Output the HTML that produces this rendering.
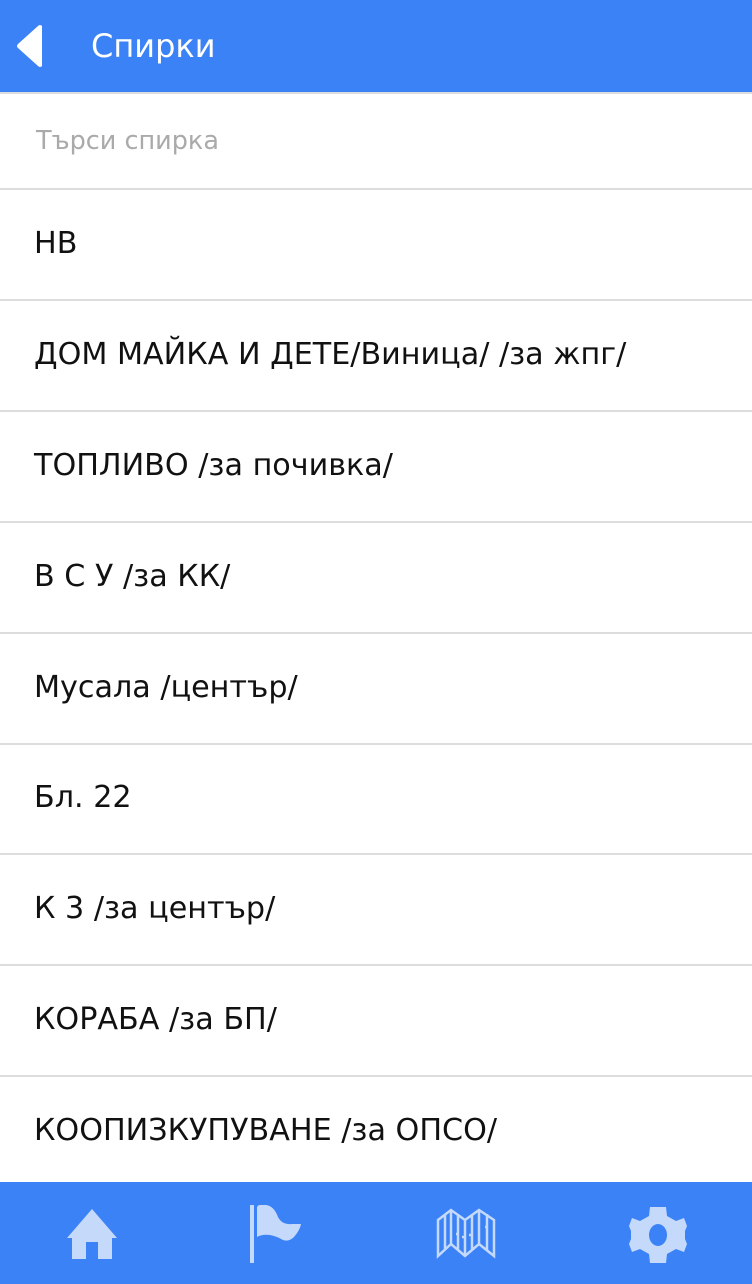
<!DOCTYPE html>
<html><head><meta charset="utf-8"><style>
body{margin:0;width:752px;height:1284px;overflow:hidden;background:#fff;font-family:"DejaVu Sans","Liberation Sans",sans-serif;position:relative}
.hdr{position:absolute;left:0;top:0;width:752px;height:92px;background:#3a82f6;border-bottom:2px solid #ddd}
.hdr .t{position:absolute;left:91px;top:27px;color:#fff;font-size:32px}
.search{position:absolute;top:94px;left:0;width:752px;height:94px;border-bottom:2px solid #ddd}
.search span{position:absolute;left:36px;top:32px;color:#aaa;font-size:25.5px}
.row{position:absolute;left:0;width:752px;height:109px;border-bottom:2px solid #ddd}
.row span{position:absolute;left:34px;top:36px;font-size:30.2px;color:#111}
.nav{position:absolute;left:0;top:1182px;width:752px;height:102px;background:#3a82f6}
</style></head><body>
<div class="hdr"><svg style="position:absolute;left:16px;top:24px" width="28" height="44" viewBox="0 0 28 44"><path d="M26 2 Q24 0 22 2 L2 20 Q0 22 2 24 L22 42 Q24 44 26 42 Z" fill="#fff"/></svg><span class="t">Спирки</span></div>
<div class="search"><span>Търси спирка</span></div>
<div class="row" style="top:190px"><span>НВ</span></div>
<div class="row" style="top:301px"><span>ДОМ МАЙКА И ДЕТЕ/Виница/ /за жпг/</span></div>
<div class="row" style="top:412px"><span>ТОПЛИВО /за почивка/</span></div>
<div class="row" style="top:523px"><span>В С У /за КК/</span></div>
<div class="row" style="top:634px"><span>Мусала /център/</span></div>
<div class="row" style="top:744px"><span>Бл. 22</span></div>
<div class="row" style="top:855px"><span>К 3 /за център/</span></div>
<div class="row" style="top:966px"><span>КОРАБА /за БП/</span></div>
<div class="row" style="top:1077px;border:none"><span>КООПИЗКУПУВАНЕ /за ОПСО/</span></div>
<div class="nav">
<svg style="position:absolute;left:67px;top:27px" width="50" height="50" viewBox="0 0 50 50"><path d="M25 0 L50 29 L45 29 L45 50 L31 50 L31 33 L19 33 L19 50 L5 50 L5 29 L0 29 Z" fill="#c5d9fb"/></svg>
<svg style="position:absolute;left:250px;top:23px" width="52" height="58" viewBox="0 0 52 58"><rect x="0" y="0" width="4" height="58" fill="#c5d9fb"/><path d="M7 3 Q7 0 10 0 L16 0 Q24 1 28 12 Q32 20 42 19 L51 19 Q50 25 44 32 Q39 37 33 35 Q26 31 20 30 Q12 29 7 32 Z" fill="#c5d9fb"/></svg>
<svg style="position:absolute;left:436px;top:26px" width="62" height="52" viewBox="0 0 62 52" fill="none" stroke="#c5d9fb" stroke-width="2.5"><path d="M2 12 L15 2 L29 12 L43 2 L58 12 L58 48 L43 36 L29 48 L15 36 L2 48 Z M9 6 V42 M15 2 V36 M22 6 V42 M29 12 V48 M36 6 V42 M43 2 V36 M51 6 V42"/><path d="M8 25 h2 M14 22h2 M20 26h2 M26 29h2 M33 27h2 M42 22h2 M49 19h3" stroke-width="2.5"/></svg>
<svg style="position:absolute;left:629px;top:25px" width="58" height="56" viewBox="0 0 58 56"><path d="M21 0 H37 L38 9 L47 14 L55 11 L58 19 L56 24 L56 32 L58 37 L55 45 L47 42 L38 47 L37 56 H21 L20 47 L11 42 L3 45 L0 37 L2 32 L2 24 L0 19 L3 11 L11 14 L20 9 Z" fill="#c5d9fb"/><ellipse cx="29" cy="28" rx="9" ry="11" fill="#3a82f6"/></svg>
</div>
</body></html>
